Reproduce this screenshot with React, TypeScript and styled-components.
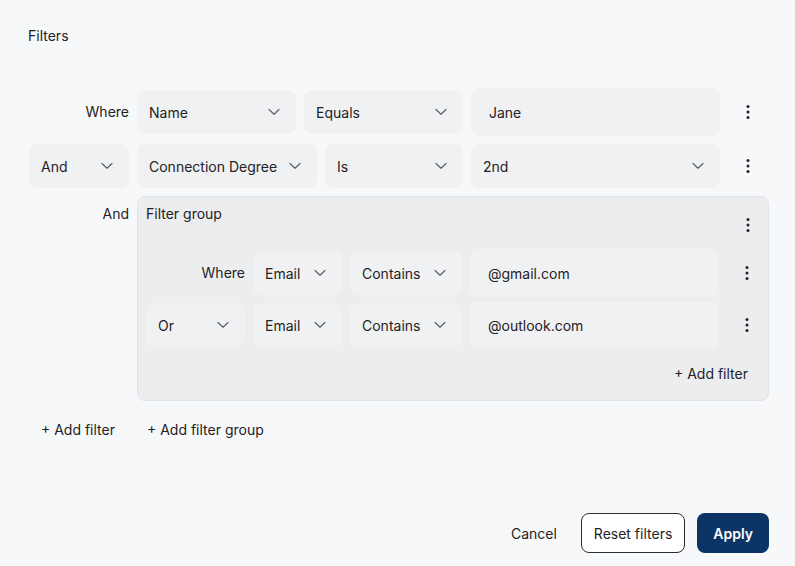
import styled, { createGlobalStyle } from "styled-components";

const GlobalStyle = createGlobalStyle`
  * { box-sizing: border-box; }
  html, body {
    margin: 0;
    background: #f7f8fa;
    font-family: Inter, "Noto Sans", "Liberation Sans", sans-serif;
    color: #1f2226;
  }
`;

const Panel = styled.div`
  width: 795px;
  min-height: 566px;
  padding: 26px 26px 0 29px;
  background: #f7f8fa;
  font-size: 14px;
`;

const Title = styled.h2`
  margin: 0 0 42px -1px;
  font-size: 14px;
  font-weight: 400;
  line-height: 20px;
`;

const Rows = styled.div`
  display: flex;
  flex-direction: column;
  gap: ${(p: { $gap: number }) => p.$gap}px;
`;

const Row = styled.div`
  display: flex;
  align-items: ${(p: { $top?: boolean }) => (p.$top ? "flex-start" : "center")};
  gap: 8px;
  min-height: 44px;
`;

const Connector = styled.div<{ $w: number; $pad?: number }>`
  width: ${(p) => p.$w}px;
  flex: none;
  text-align: right;
  line-height: 22px;
  padding-top: ${(p) => p.$pad ?? 0}px;
`;

const SelectBox = styled.button<{ $w: number }>`
  width: ${(p) => p.$w}px;
  height: 44px;
  flex: none;
  display: flex;
  align-items: center;
  justify-content: space-between;
  padding: 0 16px 0 12px;
  border: none;
  border-radius: 8px;
  background: #f0f1f3;
  font: inherit;
  color: inherit;
  text-align: left;
  white-space: nowrap;
`;

const ValueInput = styled.div`
  width: 249px;
  height: 48px;
  flex: none;
  display: flex;
  align-items: center;
  padding: 0 18px;
  border-radius: 8px;
  background: #f0f1f3;
`;

const KebabButton = styled.button`
  width: 40px;
  height: 36px;
  flex: none;
  display: flex;
  align-items: center;
  justify-content: center;
  border: none;
  background: transparent;
  padding: 0;
  color: #1f2226;
`;

const Group = styled.div`
  flex: 1;
  padding: 6px 0 7px 8px;
  border: 1px solid #e1e4e9;
  border-radius: 8px;
  background: #ecedef;
`;

const GroupHeader = styled.div`
  display: flex;
  justify-content: space-between;
  align-items: center;
  height: 44px;
  margin-bottom: 2px;
`;

const GroupTitle = styled.span`
  align-self: flex-start;
  line-height: 22px;
`;

const GroupFooter = styled.div`
  display: flex;
  justify-content: flex-end;
  margin-top: 4px;
`;

const TextButton = styled.button<{ $pad?: number }>`
  height: 40px;
  padding: 0 ${(p) => p.$pad ?? 12}px;
  border: none;
  background: transparent;
  font: inherit;
  color: inherit;
`;

const AddRow = styled.div`
  display: flex;
  gap: 8px;
  margin: 8px 0 0 0;
`;

const Footer = styled.div`
  display: flex;
  justify-content: flex-end;
  align-items: center;
  gap: 12px;
  margin-top: 64px;
`;

const OutlineButton = styled.button`
  height: 40px;
  padding: 0 12px;
  border: 1px solid #2a2d33;
  border-radius: 8px;
  background: #fff;
  font: inherit;
  color: inherit;
`;

const PrimaryButton = styled.button`
  height: 40px;
  padding: 0 16px;
  border: none;
  border-radius: 8px;
  background: #0c3566;
  color: #fff;
  font: inherit;
  font-weight: 600;
`;

const Chevron = () => (
  <svg width="12" height="8" viewBox="0 0 12 8" fill="none">
    <path d="M1 1.5 6 6.2 11 1.5" stroke="#5b6068" strokeWidth="1.2" strokeLinecap="round" strokeLinejoin="round" />
  </svg>
);

const Kebab = () => (
  <KebabButton aria-label="More">
    <svg width="6" height="16" viewBox="0 0 6 16">
      <circle cx="3" cy="2.5" r="1.5" fill="currentColor" />
      <circle cx="3" cy="8" r="1.5" fill="currentColor" />
      <circle cx="3" cy="13.5" r="1.5" fill="currentColor" />
    </svg>
  </KebabButton>
);

const Select = ({ label, w }: { label: string; w: number }) => (
  <SelectBox $w={w}>
    <span>{label}</span>
    <Chevron />
  </SelectBox>
);

const App = () => {
  return (
    <>
      <GlobalStyle />
      <Panel>
        <Title>Filters</Title>
        <Rows $gap={8}>
          <Row style={{ minHeight: 48 }}>
            <Connector $w={100}>Where</Connector>
            <Select label="Name" w={159} />
            <Select label="Equals" w={159} />
            <ValueInput>Jane</ValueInput>
            <Kebab />
          </Row>
          <Row>
            <Select label="And" w={100} />
            <Select label="Connection Degree" w={180} />
            <Select label="Is" w={138} />
            <Select label="2nd" w={249} />
            <Kebab />
          </Row>
          <Row $top>
            <Connector $w={100} $pad={7}>And</Connector>
            <Group>
              <GroupHeader>
                <GroupTitle>Filter group</GroupTitle>
                <Kebab />
              </GroupHeader>
              <Rows $gap={4}>
                <Row>
                  <Connector $w={99}>Where</Connector>
                  <Select label="Email" w={89} />
                  <Select label="Contains" w={112} />
                  <ValueInput>@gmail.com</ValueInput>
                  <Kebab />
                </Row>
                <Row>
                  <Select label="Or" w={99} />
                  <Select label="Email" w={89} />
                  <Select label="Contains" w={112} />
                  <ValueInput>@outlook.com</ValueInput>
                  <Kebab />
                </Row>
              </Rows>
              <GroupFooter>
                <TextButton $pad={20}>+ Add filter</TextButton>
              </GroupFooter>
            </Group>
          </Row>
        </Rows>
        <AddRow>
          <TextButton>+ Add filter</TextButton>
          <TextButton>+ Add filter group</TextButton>
        </AddRow>
        <Footer>
          <TextButton>Cancel</TextButton>
          <OutlineButton>Reset filters</OutlineButton>
          <PrimaryButton>Apply</PrimaryButton>
        </Footer>
      </Panel>
    </>
  );
};

export default App;
